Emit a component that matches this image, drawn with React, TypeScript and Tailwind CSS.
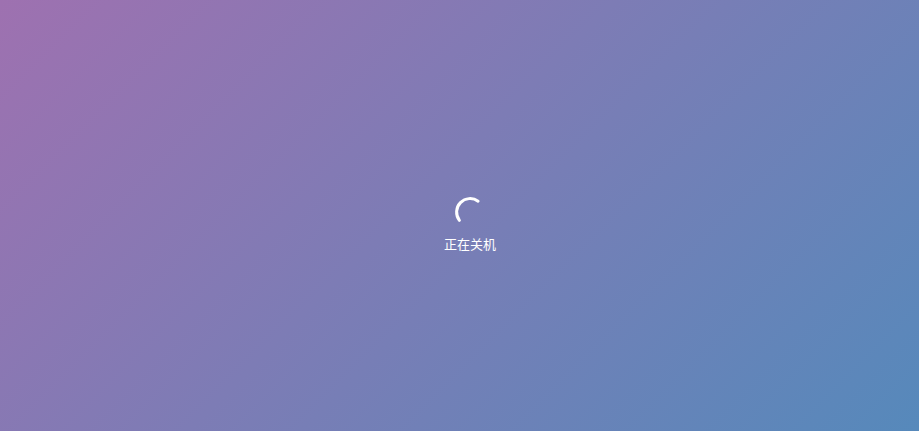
export default function App() {
  return (
    <div className="h-screen w-full flex flex-col items-center justify-center bg-[linear-gradient(135deg,#9e71b0,#5689bb)] pt-[19px] pl-[21px] font-['Noto_Sans','Noto_Sans_CJK_SC',sans-serif]">
      <svg width="32" height="32" viewBox="0 0 32 32" fill="none">
        <path d="M24.1 5.2 A13.5 13.5 0 0 0 5.4 24.3" stroke="white" strokeWidth="3" strokeLinecap="round" />
      </svg>
      <p className="mt-[6px] text-[13px] leading-5 text-white">正在关机</p>
    </div>
  );
}
